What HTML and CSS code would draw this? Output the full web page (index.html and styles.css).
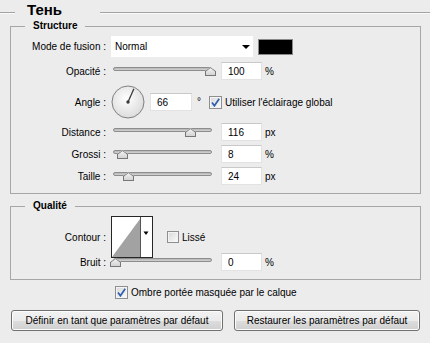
FILE: index.html
```html
<!DOCTYPE html>
<html lang="fr">
<head>
  <meta charset="UTF-8">
  <title>Ombre portée</title>
  <link rel="stylesheet" href="styles.css">
</head>
<body>
  <div class="dialog">
    <!-- Title -->
    <div class="title-row">
      <span class="rule rule-short"></span>
      <h1>Тень</h1>
      <span class="rule"></span>
    </div>

    <!-- Structure -->
    <fieldset class="group group-structure">
      <legend>Structure</legend>

      <div class="row row-mode">
        <span class="lbl">Mode de fusion :</span>
        <div class="select">Normal<span class="caret"></span></div>
        <span class="swatch"></span>
      </div>

      <div class="row row-slider first">
        <span class="lbl">Opacité :</span>
        <div class="slider"><span class="track"></span><span class="thumb" style="left: 92px"></span></div>
        <input class="num" type="text" value="100">
        <span class="unit">%</span>
      </div>

      <div class="row row-angle">
        <span class="lbl">Angle :</span>
        <svg class="dial" width="34" height="34" viewBox="0 0 34 34">
          <defs>
            <radialGradient id="dial-fill" cx="0.45" cy="0.4" r="0.65">
              <stop offset="0" stop-color="#ffffff"/>
              <stop offset="1" stop-color="#d9d9d9"/>
            </radialGradient>
          </defs>
          <circle cx="17" cy="17" r="16" fill="url(#dial-fill)" stroke="#808080"/>
          <line x1="17" y1="17" x2="22.9" y2="3.8" stroke="#3a3a3a" stroke-width="1.3"/>
          <circle cx="17" cy="17" r="1.7" fill="#3a3a3a"/>
        </svg>
        <input class="num num-angle" type="text" value="66">
        <span class="deg">°</span>
        <span class="cb checked"><svg width="9" height="9" viewBox="0 0 9 9"><path d="M1 4.6 L3.4 7.8 L8.2 0.8" fill="none" stroke="#2f5fae" stroke-width="1.7"/></svg></span>
        <span class="cb-text">Utiliser l'éclairage global</span>
      </div>

      <div class="row row-slider">
        <span class="lbl">Distance :</span>
        <div class="slider"><span class="track"></span><span class="thumb" style="left: 72px"></span></div>
        <input class="num" type="text" value="116">
        <span class="unit">px</span>
      </div>

      <div class="row row-slider">
        <span class="lbl">Grossi :</span>
        <div class="slider"><span class="track"></span><span class="thumb" style="left: 4px"></span></div>
        <input class="num" type="text" value="8">
        <span class="unit">%</span>
      </div>

      <div class="row row-slider">
        <span class="lbl">Taille :</span>
        <div class="slider"><span class="track"></span><span class="thumb" style="left: 10px"></span></div>
        <input class="num" type="text" value="24">
        <span class="unit">px</span>
      </div>
    </fieldset>

    <!-- Qualité -->
    <fieldset class="group group-quality">
      <legend>Qualité</legend>

      <div class="row row-contour">
        <span class="lbl">Contour :</span>
        <svg class="contour" width="42" height="42" viewBox="0 0 42 42">
          <rect x="0.5" y="0.5" width="41" height="41" fill="#fff" stroke="#262626"/>
          <polygon points="1,41 29,3 29,41" fill="#a2a2a2"/>
          <line x1="29.5" y1="1" x2="29.5" y2="41" stroke="#555"/>
          <polygon points="32.5,15.5 37.5,15.5 35,19" fill="#000"/>
        </svg>
        <span class="cb"></span>
        <span class="cb-text">Lissé</span>
      </div>

      <div class="row row-slider row-noise">
        <span class="lbl">Bruit :</span>
        <div class="slider"><span class="track"></span><span class="thumb" style="left: -3px"></span></div>
        <input class="num" type="text" value="0">
        <span class="unit">%</span>
      </div>
    </fieldset>

    <div class="row row-knockout">
      <span class="cb checked"><svg width="9" height="9" viewBox="0 0 9 9"><path d="M1 4.6 L3.4 7.8 L8.2 0.8" fill="none" stroke="#2f5fae" stroke-width="1.7"/></svg></span>
      <span class="cb-text">Ombre portée masquée par le calque</span>
    </div>

    <div class="buttons">
      <button class="btn btn-default">Définir en tant que paramètres par défaut</button>
      <button class="btn btn-reset">Restaurer les paramètres par défaut</button>
    </div>
  </div>
</body>
</html>
```

FILE: styles.css
```css
/* General */
body {
  margin: 0;
  background: #ececec;
  color: #000;
  font-family: "Liberation Sans", Arial, sans-serif;
  font-size: 10px;
}

.dialog {
  width: 430px;
  height: 343px;
  overflow: hidden;
}

/* Title */
.title-row {
  display: flex;
  height: 18px;
}

.title-row h1 {
  margin: 1px 0 0 12px;
  width: 73px;
  font-size: 15px;
  line-height: 18px;
  font-weight: bold;
}

.rule {
  flex: 1;
  height: 0;
  margin-top: 12px;
  border-top: 1px solid #a3a3a3;
  border-bottom: 1px solid #fafafa;
}

.rule-short {
  flex: 0 0 15px;
}

/* Group boxes */
.group {
  margin: 2px 9px 0 10px;
  padding: 4px 0 8px 0;
  border: 1px solid #a6a6a6;
  min-inline-size: 0;
}

.group legend {
  margin-left: 14px;
  padding: 0 8px;
  font-weight: bold;
  line-height: 12px;
}

.group-quality {
  margin-top: 6px;
}

/* Rows */
.row {
  display: flex;
  align-items: center;
}

.lbl {
  width: 95px;
  margin-right: 5px;
  text-align: right;
  white-space: nowrap;
}

.row-mode {
  height: 21px;
}

.row-slider {
  height: 18px;
  margin-top: 4px;
}

.row-slider.first {
  margin-top: 5px;
}

.row-angle {
  height: 34px;
  margin-top: 5px;
  margin-bottom: 2px;
}

/* Blend mode select */
.select {
  position: relative;
  width: 138px;
  height: 21px;
  padding-left: 4px;
  line-height: 21px;
  background: #fff;
}

.caret {
  position: absolute;
  left: 131px;
  top: 9px;
  border-left: 4px solid transparent;
  border-right: 4px solid transparent;
  border-top: 4px solid #000;
}

.swatch {
  width: 33px;
  height: 14px;
  margin-left: 5px;
  background: #000;
  border: 1px solid #8a8a8a;
}

/* Sliders */
.slider {
  position: relative;
  align-self: stretch;
  width: 99px;
  margin-left: 2px;
}

.track {
  position: absolute;
  left: 0;
  right: 0;
  top: 5px;
  height: 2px;
  border: 1px solid #8d8d8d;
  border-radius: 3px;
  background: linear-gradient(#b4b4b4, #d4d4d4);
}

.thumb {
  position: absolute;
  top: 5px;
  width: 11px;
  height: 9px;
  background: linear-gradient(#f7f7f7, #cfcfcf);
  clip-path: polygon(50% 0, 100% 45%, 100% 100%, 0 100%, 0 45%);
}

.thumb::before {
  content: "";
  position: absolute;
  inset: 0;
  background: #777;
  clip-path: polygon(50% 0, 100% 45%, 100% 100%, 0 100%, 0 45%, 9% 50%, 9% 89%, 91% 89%, 91% 50%, 50% 12%, 9% 50%, 0 45%);
}

/* Number fields */
.num {
  box-sizing: border-box;
  width: 41px;
  height: 18px;
  margin: 0 0 0 9px;
  padding: 0 0 0 6px;
  border: 1px solid #e2e2e2;
  border-top-color: #c8c8c8;
  background: #fff;
  font: inherit;
  color: #000;
  outline: none;
}

.num-angle {
  width: 42px;
  margin-left: 5px;
}

.unit {
  margin-left: 3px;
}

.deg {
  margin-left: 5px;
  align-self: flex-start;
  margin-top: 11px;
}

/* Checkboxes */
.cb {
  display: flex;
  align-items: center;
  justify-content: center;
  box-sizing: border-box;
  width: 13px;
  height: 13px;
  border: 1px solid #8e8f8f;
  background: linear-gradient(135deg, #d8d8d8, #fbfbfb);
  box-shadow: inset 0 0 0 1px #f4f4f4;
}

.row-angle .cb {
  margin-left: 8px;
}

.cb-text {
  margin-left: 3px;
  white-space: nowrap;
}

/* Quality */
.row-contour {
  height: 42px;
}

.contour {
  display: block;
}

.row-contour .cb {
  margin-left: 14px;
  width: 12px;
  height: 12px;
}

.row-noise {
  margin-top: -5px;
}

/* Bottom */
.row-knockout {
  height: 13px;
  margin-top: 6px;
  padding-left: 115px;
}

.buttons {
  display: flex;
  gap: 11px;
  margin-top: 11px;
  padding-left: 11px;
}

.btn {
  height: 21px;
  padding: 0;
  border: 1px solid #707070;
  border-radius: 3px;
  background: linear-gradient(#f2f2f2 0%, #ebebeb 50%, #dddddd 51%, #cfcfcf 100%);
  box-shadow: inset 0 0 0 1px #fcfcfc;
  font: inherit;
  color: #000;
}

.btn-default {
  width: 212px;
}

.btn-reset {
  width: 186px;
}
```
